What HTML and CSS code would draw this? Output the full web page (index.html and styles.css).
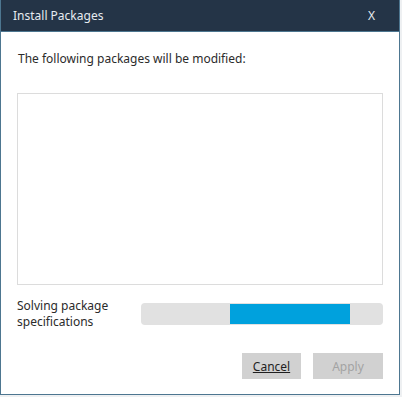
FILE: index.html
```html
<!DOCTYPE html>
<html>
<head>
<meta charset="utf-8">
<link rel="stylesheet" href="styles.css">
</head>
<body>
<div class="page">
  <div class="dialog">
    <div class="header">
      <span class="title">Install Packages</span>
      <span class="close">X</span>
    </div>
    <div class="content">
      <p class="intro">The following packages will be modified:</p>
      <div class="list"></div>
      <div class="progress-row">
        <div class="progress-label">Solving package<br>specifications</div>
        <div class="progress-track">
          <div class="progress-fill"></div>
        </div>
      </div>
      <div class="buttons">
        <button class="btn cancel">Cancel</button>
        <button class="btn apply" disabled>Apply</button>
      </div>
    </div>
  </div>
</div>
</body>
</html>
```
FILE: styles.css
```css
html, body {
  margin: 0;
  padding: 0;
  background: #eef0f2;
}
.page {
  width: 402px;
  height: 397px;
  overflow: hidden;
}
.dialog {
  box-sizing: border-box;
  width: 400px;
  height: 395px;
  background: #ffffff;
  border: 1px solid #4d7690;
  border-top: none;
  font-family: "Noto Sans", "Open Sans", sans-serif;
  color: #2b2b2b;
  display: flex;
  flex-direction: column;
}
.header {
  height: 32px;
  box-sizing: border-box;
  background: #243447;
  border-bottom: 1px solid #4d7690;
  display: flex;
  align-items: center;
  justify-content: space-between;
  padding: 0 24px 0 12px;
  color: #e6ebf0;
  font-size: 12px;
}
.close {
  font-size: 12px;
}
.content {
  padding: 0 16px 0 16px;
  display: flex;
  flex-direction: column;
  flex: 1;
}
.intro {
  margin: 19px 0 0 1px;
  font-size: 12px;
  line-height: 16px;
}
.list {
  margin-top: 26px;
  height: 190px;
  border: 1px solid #dcdcdc;
}
.progress-row {
  margin-top: 13px;
  display: flex;
  align-items: center;
}
.progress-label {
  width: 124px;
  font-size: 12px;
  line-height: 16px;
}
.progress-track {
  flex: 1;
  height: 22px;
  background: #e1e1e1;
  border-radius: 4px;
  position: relative;
}
.progress-fill {
  position: absolute;
  left: 89px;
  width: 120px;
  top: 1px;
  bottom: 1px;
  background: #00a1dd;
}
.buttons {
  margin-top: 23px;
  display: flex;
  justify-content: flex-end;
  gap: 12px;
}
.btn {
  height: 26px;
  border: none;
  background: #d1d1d1;
  font-family: "Noto Sans", "Open Sans", sans-serif;
  font-size: 12px;
  padding: 0;
}
.cancel {
  width: 59px;
  color: #1f1f1f;
  text-decoration: underline;
}
.apply {
  width: 70px;
  color: #a3a3a3;
}
```
